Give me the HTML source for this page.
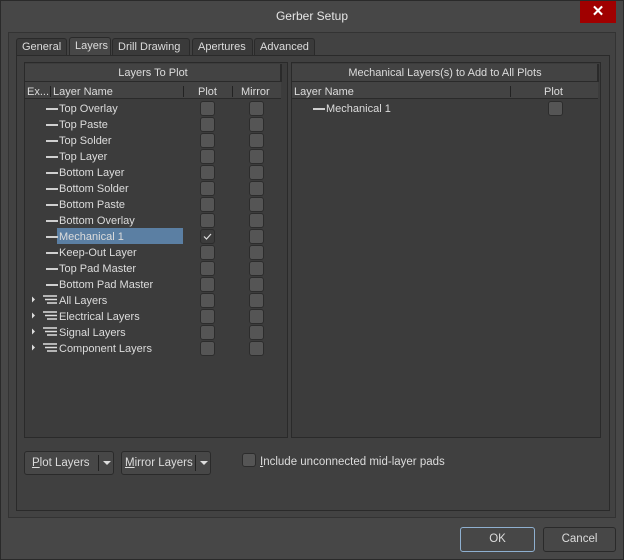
<!DOCTYPE html><html><head><style>
*{box-sizing:border-box;margin:0;padding:0}
body{width:624px;height:560px;background:#474747;font-family:"Liberation Sans",sans-serif;font-size:11px;color:#dcdcdc;position:relative;overflow:hidden}
.a{position:absolute}
.win{left:0;top:0;width:624px;height:560px;border:1px solid #2a2a2a}
.cb{position:absolute;width:15px;height:15px;background:#555;border:1px solid #2c2c2c;border-radius:3px}
.row{position:absolute;height:16px;line-height:18px;white-space:nowrap}
.dash{display:inline-block;width:12px;height:2px;background:#cfcfcf;vertical-align:middle;margin-right:1px}
.tab{position:absolute;top:38px;height:18px;line-height:17px;background:#3a3a3a;border:1px solid #2a2a2a;border-bottom:none;border-radius:3px 3px 0 0;padding:0 5px;font-size:11px}
.btn{position:absolute;background:#474747;border:1px solid #2a2a2a;border-radius:3px;line-height:22px;font-size:11.5px}
.tri{position:absolute;width:0;height:0;border-left:4px solid transparent;border-right:4px solid transparent;border-top:4px solid #ddd}
</style></head><body>
<div class="a win"></div>
<div class="a" style="left:0;width:624px;top:16px;text-align:center;font-size:12px;line-height:0;color:#e6e6e6">Gerber Setup</div>
<div class="a" style="left:580px;top:1px;width:36px;height:22px;background:#a00000;color:#fff;text-align:center;font-size:15px;line-height:22px;font-weight:bold">✕</div>
<div class="a" style="left:8px;top:32px;width:608px;height:486px;background:#424242;border:1px solid #333"></div>
<div class="tab" style="left:16px;width:51px">General</div>
<div class="tab" style="left:69px;background:#474747;top:37px;height:19px;width:42px">Layers</div>
<div class="tab" style="left:112px;width:78px">Drill Drawing</div>
<div class="tab" style="left:192px;width:61px">Apertures</div>
<div class="tab" style="left:254px;width:61px">Advanced</div>
<div class="a" style="left:16px;top:55px;width:594px;height:456px;background:#404040;border:1px solid #2a2a2a"></div>
<!-- left list -->
<div class="a" style="left:24px;top:62px;width:264px;height:376px;background:#3c3c3c;border:1px solid #2a2a2a"></div>
<div class="a" style="left:25px;top:64px;width:256px;height:18px;background:#434343;border-bottom:1px solid #2a2a2a;text-align:center;line-height:18px">Layers To Plot</div>
<div class="a" style="left:280px;top:64px;width:2px;height:18px;background:#2a2a2a"></div>
<div class="a" style="left:25px;top:82px;width:256px;height:17px;background:#434343;border-bottom:1px solid #2a2a2a;line-height:17px"></div>
<div class="row" style="left:27px;top:83px">Ex...</div>
<div class="a" style="left:50px;top:86px;width:1px;height:11px;background:#222"></div>
<div class="row" style="left:53px;top:83px">Layer Name</div>
<div class="a" style="left:183px;top:86px;width:1px;height:11px;background:#222"></div>
<div class="row" style="left:198px;top:83px">Plot</div>
<div class="a" style="left:232px;top:86px;width:1px;height:11px;background:#222"></div>
<div class="row" style="left:241px;top:83px">Mirror</div>
<div class="a" style="left:57px;top:228px;width:126px;height:16px;background:#5b7fa3"></div>
<div class="row" style="left:46px;top:100px"><span class="dash"></span>Top Overlay</div>
<div class="row" style="left:46px;top:116px"><span class="dash"></span>Top Paste</div>
<div class="row" style="left:46px;top:132px"><span class="dash"></span>Top Solder</div>
<div class="row" style="left:46px;top:148px"><span class="dash"></span>Top Layer</div>
<div class="row" style="left:46px;top:164px"><span class="dash"></span>Bottom Layer</div>
<div class="row" style="left:46px;top:180px"><span class="dash"></span>Bottom Solder</div>
<div class="row" style="left:46px;top:196px"><span class="dash"></span>Bottom Paste</div>
<div class="row" style="left:46px;top:212px"><span class="dash"></span>Bottom Overlay</div>
<div class="row" style="left:46px;top:228px"><span class="dash"></span>Mechanical 1</div>
<div class="row" style="left:46px;top:244px"><span class="dash"></span>Keep-Out Layer</div>
<div class="row" style="left:46px;top:260px"><span class="dash"></span>Top Pad Master</div>
<div class="row" style="left:46px;top:276px"><span class="dash"></span>Bottom Pad Master</div>
<svg class="a" style="left:30px;top:292px" width="30" height="64">
<g fill="#ddd"><path d="M2 4.5l3 3-3 3z"/><path d="M2 20.5l3 3-3 3z"/><path d="M2 36.5l3 3-3 3z"/><path d="M2 52.5l3 3-3 3z"/></g>
<g stroke="#ddd" stroke-width="1.6"><path d="M13 4h14M15 7.5h12M17 11h10"/><path d="M13 20h14M15 23.5h12M17 27h10"/><path d="M13 36h14M15 39.5h12M17 43h10"/><path d="M13 52h14M15 55.5h12M17 59h10"/></g></svg>
<div class="row" style="left:59px;top:292px">All Layers</div>
<div class="row" style="left:59px;top:308px">Electrical Layers</div>
<div class="row" style="left:59px;top:324px">Signal Layers</div>
<div class="row" style="left:59px;top:340px">Component Layers</div>
<div class="cb" style="left:200px;top:101px"></div><div class="cb" style="left:249px;top:101px"></div>
<div class="cb" style="left:200px;top:117px"></div><div class="cb" style="left:249px;top:117px"></div>
<div class="cb" style="left:200px;top:133px"></div><div class="cb" style="left:249px;top:133px"></div>
<div class="cb" style="left:200px;top:149px"></div><div class="cb" style="left:249px;top:149px"></div>
<div class="cb" style="left:200px;top:165px"></div><div class="cb" style="left:249px;top:165px"></div>
<div class="cb" style="left:200px;top:181px"></div><div class="cb" style="left:249px;top:181px"></div>
<div class="cb" style="left:200px;top:197px"></div><div class="cb" style="left:249px;top:197px"></div>
<div class="cb" style="left:200px;top:213px"></div><div class="cb" style="left:249px;top:213px"></div>
<div class="cb" style="left:200px;top:229px;background:#3c3c3c"><svg width="13" height="13" class="a" style="left:0;top:0"><path d="M3 6.5l2.5 2.5 4.5-5" stroke="#ddd" stroke-width="1.2" fill="none"/></svg></div><div class="cb" style="left:249px;top:229px"></div>
<div class="cb" style="left:200px;top:245px"></div><div class="cb" style="left:249px;top:245px"></div>
<div class="cb" style="left:200px;top:261px"></div><div class="cb" style="left:249px;top:261px"></div>
<div class="cb" style="left:200px;top:277px"></div><div class="cb" style="left:249px;top:277px"></div>
<div class="cb" style="left:200px;top:293px"></div><div class="cb" style="left:249px;top:293px"></div>
<div class="cb" style="left:200px;top:309px"></div><div class="cb" style="left:249px;top:309px"></div>
<div class="cb" style="left:200px;top:325px"></div><div class="cb" style="left:249px;top:325px"></div>
<div class="cb" style="left:200px;top:341px"></div><div class="cb" style="left:249px;top:341px"></div>
<!-- right list -->
<div class="a" style="left:291px;top:62px;width:310px;height:376px;background:#3c3c3c;border:1px solid #2a2a2a"></div>
<div class="a" style="left:292px;top:64px;width:306px;height:18px;background:#434343;border-bottom:1px solid #2a2a2a;text-align:center;line-height:18px">Mechanical Layers(s) to Add to All Plots</div>
<div class="a" style="left:597px;top:64px;width:2px;height:18px;background:#2a2a2a"></div>
<div class="a" style="left:292px;top:82px;width:306px;height:17px;background:#434343;border-bottom:1px solid #2a2a2a"></div>
<div class="row" style="left:294px;top:83px">Layer Name</div>
<div class="a" style="left:510px;top:86px;width:1px;height:11px;background:#222"></div>
<div class="row" style="left:544px;top:83px">Plot</div>
<div class="row" style="left:313px;top:100px"><span class="dash"></span>Mechanical 1</div>
<div class="cb" style="left:548px;top:101px"></div>
<!-- bottom -->
<div class="btn" style="left:24px;top:451px;width:90px;height:24px"><span style="margin-left:7px"><u>P</u>lot Layers</span><div class="a" style="left:73px;top:3px;width:1px;height:16px;background:#222"></div><div class="tri" style="left:78px;top:9px"></div></div>
<div class="btn" style="left:121px;top:451px;width:90px;height:24px"><span style="margin-left:3px"><u>M</u>irror Layers</span><div class="a" style="left:73px;top:3px;width:1px;height:16px;background:#222"></div><div class="tri" style="left:78px;top:9px"></div></div>
<div class="cb" style="left:242px;top:453px;width:14px;height:14px"></div>
<div class="row" style="left:260px;top:453px;font-size:11.5px"><u>I</u>nclude unconnected mid-layer pads</div>
<div class="btn" style="left:460px;top:527px;width:75px;height:25px;border-color:#8fb0d0;text-align:center;line-height:23px">OK</div>
<div class="btn" style="left:543px;top:527px;width:73px;height:25px;text-align:center;line-height:23px">Cancel</div>
</body></html>
